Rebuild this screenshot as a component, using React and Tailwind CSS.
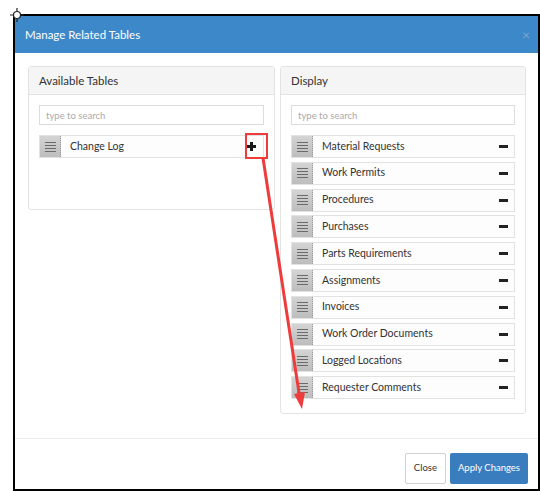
import { useState } from 'react'

const displayTables = [
  'Material Requests',
  'Work Permits',
  'Procedures',
  'Purchases',
  'Parts Requirements',
  'Assignments',
  'Invoices',
  'Work Order Documents',
  'Logged Locations',
  'Requester Comments',
]

function Handle() {
  return (
    <div className="w-[21px] h-full shrink-0 flex flex-col items-center justify-center gap-[2px] bg-gradient-to-b from-[#d4d4d4] to-[#bdbdbd] border-r border-dotted border-[#9a9a9a]">
      <span className="block w-[11px] h-px bg-[#6b6b6b]" />
      <span className="block w-[11px] h-px bg-[#6b6b6b]" />
      <span className="block w-[11px] h-px bg-[#6b6b6b]" />
      <span className="block w-[11px] h-px bg-[#6b6b6b]" />
    </div>
  )
}

function Row({ label, action }) {
  return (
    <div className="h-[23px] flex items-center border border-[#e2e2e2] bg-[#fdfdfd]">
      <Handle />
      <span className="ml-[9px] flex-1 text-[10.5px] text-[#333]">{label}</span>
      {action === 'add' ? (
        <span className="mr-[7px] relative w-[9px] h-[9px]">
          <span className="absolute left-0 top-[3px] w-[9px] h-[3px] bg-[#1a1a1a]" />
          <span className="absolute left-[3px] top-0 w-[3px] h-[9px] bg-[#1a1a1a]" />
        </span>
      ) : (
        <span className="mr-[6px] block w-[9px] h-[3px] bg-[#222]" />
      )}
    </div>
  )
}

function Panel({ title, children, className = '', bodyClass = 'p-[10px]' }) {
  const [q, setQ] = useState('')
  return (
    <div className={'border border-[#e3e3e3] rounded-[3px] bg-white ' + className}>
      <div className="h-[28px] flex items-center px-[10px] bg-[#f5f5f5] border-b border-[#e3e3e3] text-[11.5px] text-[#333]">
        {title}
      </div>
      <div className={bodyClass}>
        <input
          value={q}
          onChange={e => setQ(e.target.value)}
          placeholder="type to search"
          className="block w-full h-[20px] border border-[#dcdcdc] px-[6px] text-[9.5px] placeholder:text-[#aaa] focus:outline-none"
        />
        <div className="mt-[10px] flex flex-col gap-[3.8px]">{children}</div>
      </div>
    </div>
  )
}

export default function App() {
  return (
    <div className="relative w-[540px] h-[491px] bg-white" style={{ fontFamily: 'Lato, "Open Sans", sans-serif' }}>
      <div className="pt-[14px] pl-[13px]">
        <div className="w-[527px] h-[477px] border-2 border-black bg-white flex flex-col">
          {/* Header */}
          <div className="h-[37px] shrink-0 bg-[#3d88c9] flex items-center justify-between pl-[10px] pr-[8px]">
            <span className="text-[11.5px] text-white">Manage Related Tables</span>
            <span className="text-[14px] leading-none text-[#7ba6cf]">×</span>
          </div>

          {/* Body */}
          <div className="flex-1 flex items-start gap-[5px] pt-[13px] pl-[13px] pr-[10px]">
            <Panel title="Available Tables" className="w-[247px] h-[144px]">
              <Row label="Change Log" action="add" />
            </Panel>
            <Panel title="Display" className="w-[246px]" bodyClass="px-[10px] pt-[10px] pb-[14px]">
              {displayTables.map(t => (
                <Row key={t} label={t} action="remove" />
              ))}
            </Panel>
          </div>

          {/* Footer */}
          <div className="h-[51px] shrink-0 border-t border-[#ececec] flex items-start justify-end gap-[4px] pt-[14px] pr-[10px]">
            <button className="h-[31px] px-[8px] border border-[#d0d0d0] rounded-[2px] bg-white text-[9.5px] text-[#333]">
              Close
            </button>
            <button className="h-[31px] px-[8px] rounded-[2px] bg-[#3a7dbf] text-[9.5px] text-white">
              Apply Changes
            </button>
          </div>
        </div>
      </div>

      {/* move cursor */}
      <svg className="absolute left-[9px] top-[7px]" width="16" height="16" viewBox="0 0 16 16">
        <circle cx="8" cy="8" r="3.5" fill="white" stroke="#222" strokeWidth="1.2" />
        <path d="M8 1v3M8 12v3M1 8h3M12 8h3" stroke="#222" strokeWidth="1.2" />
      </svg>

      {/* annotation */}
      <svg className="absolute inset-0 pointer-events-none" width="540" height="491" viewBox="0 0 540 491">
        <rect x="246" y="134" width="21" height="24" fill="none" stroke="#ee3b3b" strokeWidth="2" />
        <line x1="263" y1="158" x2="299.5" y2="396" stroke="#ee3b3b" strokeWidth="3" />
        <polygon points="302,409 294,394 305,392" fill="#ee3b3b" />
      </svg>
    </div>
  )
}
